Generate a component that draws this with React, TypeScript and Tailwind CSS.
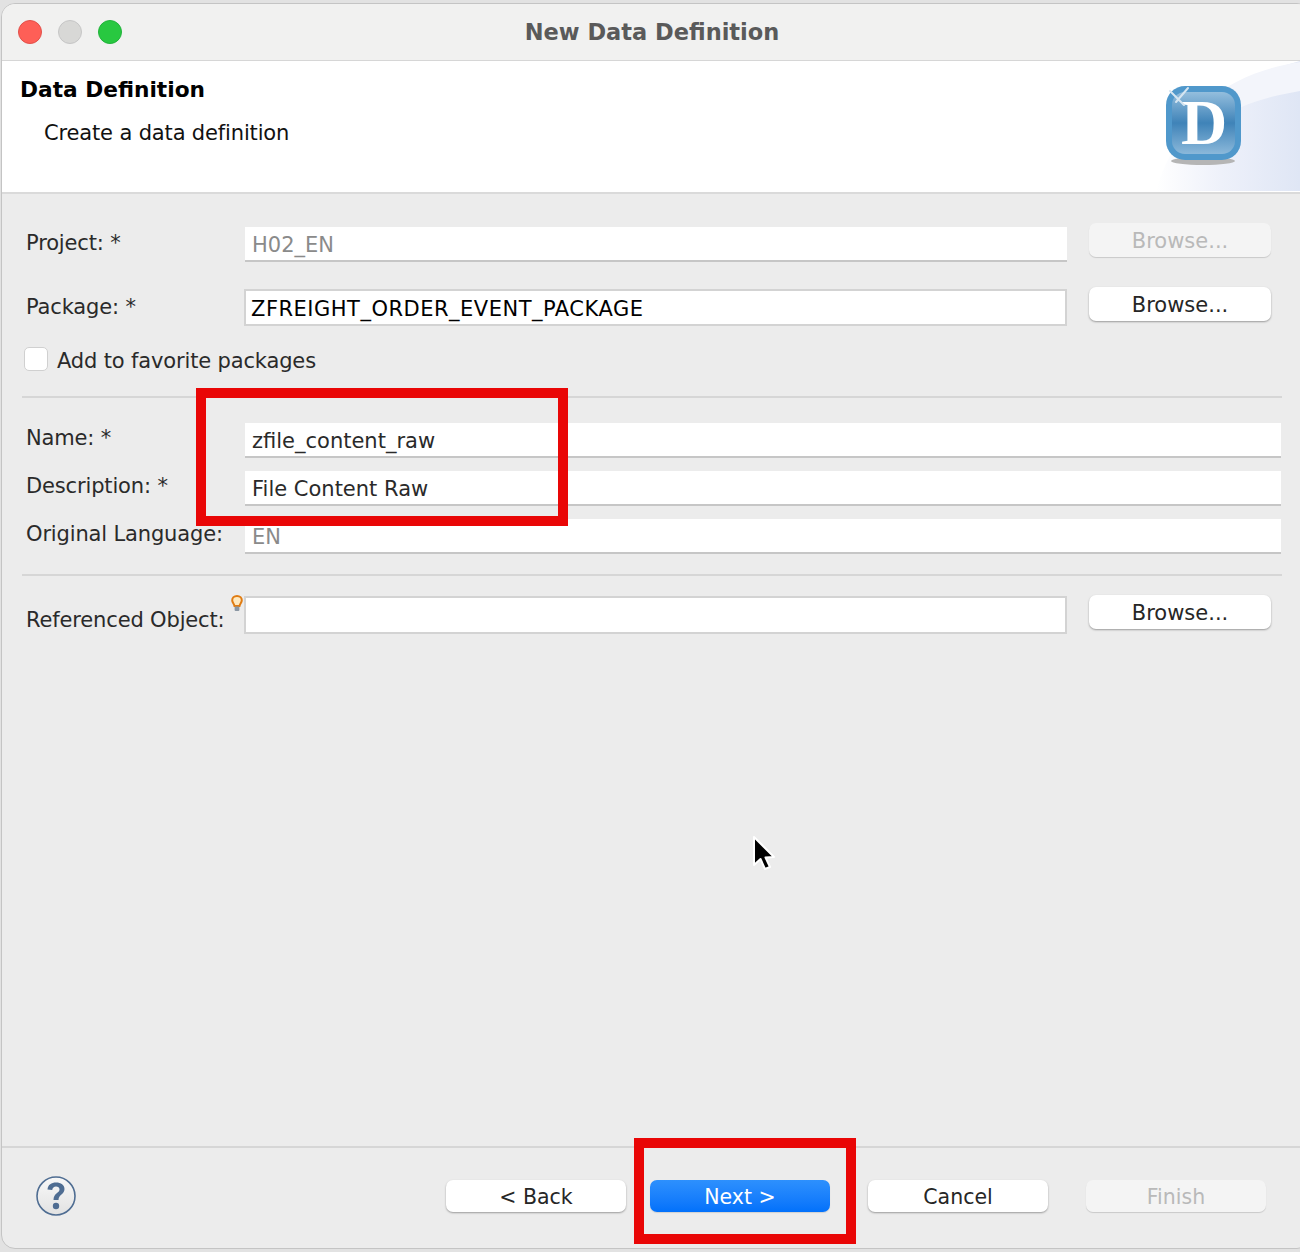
import React from 'react';

const FONT = "font-['DejaVu_Sans','Noto_Sans',sans-serif]";

const Browse = ({ disabled = false }: { disabled?: boolean }) => (
  <button
    className={
      disabled
        ? 'ml-[22px] h-[34px] w-[182px] shrink-0 rounded-[7px] bg-[#f4f4f4] text-[21px] leading-[36px] text-[#b9b9b9] shadow-[0_1px_1px_rgba(0,0,0,0.15)]'
        : 'ml-[22px] h-[34px] w-[182px] shrink-0 rounded-[7px] bg-white text-[21px] leading-[36px] text-[#262626] shadow-[0_1px_2px_rgba(0,0,0,0.35)]'
    }
  >
    Browse...
  </button>
);

const Label = ({ children, top }: { children: React.ReactNode; top: number }) => (
  <div className="relative h-full w-[219px] shrink-0 tracking-[-0.15px] text-[#2a2a2a]" style={{ paddingTop: top }}>
    {children}
  </div>
);

// plain read-only field, the window's inputs have only a bottom shadow line
const Field = ({ value, muted = false, top = 0 }: { value: string; muted?: boolean; top?: number }) => (
  <div
    className={
      'h-[35px] flex-1 border-b-2 border-[#c6c6c6] bg-white pl-[7px] text-[21px] leading-[37px] ' +
      (muted ? 'text-[#8a8a8a]' : 'text-[#2a2a2a]')
    }
    style={{ marginTop: top }}
  >
    {value}
  </div>
);

const FooterButton = ({ label, kind }: { label: string; kind: 'normal' | 'primary' | 'disabled' }) => {
  const look = {
    normal: 'bg-white text-[#262626] shadow-[0_1px_2px_rgba(0,0,0,0.35)]',
    primary: 'bg-gradient-to-b from-[#2d90fd] to-[#0271fb] text-white shadow-[0_1px_1px_rgba(0,0,0,0.12)]',
    disabled: 'bg-[#f4f4f4] text-[#b9b9b9] shadow-[0_1px_1px_rgba(0,0,0,0.15)]',
  }[kind];
  return (
    <button className={'h-[32px] w-[180px] rounded-[7px] text-[20.5px] leading-[34px] ' + look}>{label}</button>
  );
};

const Logo = () => (
  <svg width="146" height="130" viewBox="0 0 146 130" className="absolute right-0 top-0">
    <defs>
      <linearGradient id="swoosh" x1="0" y1="0" x2="1" y2="0">
        <stop offset="0" stopColor="#ffffff" />
        <stop offset="0.45" stopColor="#eef1fa" />
        <stop offset="1" stopColor="#dfe6f5" />
      </linearGradient>
      <linearGradient id="glass" x1="0" y1="0" x2="0" y2="1">
        <stop offset="0" stopColor="#94bedd" />
        <stop offset="0.5" stopColor="#3f83b8" />
        <stop offset="1" stopColor="#8bb8da" />
      </linearGradient>
    </defs>
    <path d="M2 130 C18 70 70 20 146 0 L146 130 Z" fill="url(#swoosh)" />
    <path d="M46 46 C80 16 115 6 146 1 L146 30 C110 36 80 46 62 62 Z" fill="#f3f5fb" />
    <ellipse cx="49" cy="100" rx="32" ry="4" fill="#b5b5b5" />
    <rect x="12" y="25" width="75" height="74" rx="19" fill="#5098cb" />
    <rect x="18" y="31" width="63" height="62" rx="13" fill="url(#glass)" />
    <text x="50" y="83" textAnchor="middle" fontFamily="'Liberation Serif', serif" fontWeight="700" fontSize="64" fill="#ffffff">
      D
    </text>
    <path d="M16 30 L30 44 M34 27 L22 41" stroke="#d5e5f1" strokeWidth="2" strokeLinecap="round" />
  </svg>
);

const HelpIcon = () => (
  <svg width="42" height="42" viewBox="0 0 42 42">
    <defs>
      <linearGradient id="helpBg" x1="0" y1="0" x2="0" y2="1">
        <stop offset="0" stopColor="#f8f8f8" />
        <stop offset="1" stopColor="#e2e2e2" />
      </linearGradient>
    </defs>
    <circle cx="21" cy="21" r="19" fill="url(#helpBg)" stroke="#4f6d92" strokeWidth="1.6" />
    <path
      d="M12.5 14.5 C13 9.5 16.5 7.5 21 7.5 C26 7.5 29.5 10 29.5 14 C29.5 19.5 23.5 19.5 23.5 25 L18.5 25 C18.5 18 24.5 18 24.5 14.5 C24.5 12.5 23 11.5 21 11.5 C19 11.5 17.5 12.8 17.2 15 Z"
      fill="#4f6d92"
    />
    <circle cx="21" cy="31" r="3.2" fill="#4f6d92" />
  </svg>
);

export default function App() {
  return (
    <div className={'relative h-[1252px] w-[1300px] overflow-hidden bg-[#e2e2e2] pl-[1px] pt-[3px] ' + FONT}>
      <div className="flex h-[1246px] w-[1310px] flex-col overflow-hidden rounded-[14px] border border-[#c4c4c4] bg-[#ececec] text-[21px] leading-[30px]">
        {/* title bar */}
        <div className="relative flex h-[57px] shrink-0 items-center justify-center border-b border-[#d6d6d6] bg-[#f1f1f0] pr-[8px]">
          <div className="absolute left-[16px] top-[16px] flex gap-[16px]">
            <span className="h-[24px] w-[24px] rounded-full border border-[#e2504a] bg-[#fe5f57]" />
            <span className="h-[24px] w-[24px] rounded-full border border-[#c6c6c6] bg-[#d8d8d6]" />
            <span className="h-[24px] w-[24px] rounded-full border border-[#21b33b] bg-[#28c840]" />
          </div>
          <span className="text-[22.5px] font-bold text-[#5a5a5a]">New Data Definition</span>
        </div>

        {/* banner */}
        <div className="relative h-[133px] w-[1298px] shrink-0 border-b-2 border-[#dadada] bg-white pl-[18px] pt-[14px]">
          <div className="text-[21.7px] font-bold leading-[30px] text-black">Data Definition</div>
          <div className="ml-[24px] mt-[13px] text-[21px] leading-[30px] tracking-[-0.15px] text-[#111]">Create a data definition</div>
          <Logo />
        </div>

        {/* form */}
        <div className="w-[1298px] flex-1 pl-[24px]">
          <div className="mt-[29px] flex h-[38px] pr-[29px]">
            <Label top={5}>Project: *</Label>
            <Field value="H02_EN" muted top={4} />
            <Browse disabled />
          </div>

          <div className="mt-[26px] flex h-[38px] pr-[29px]">
            <Label top={5}>Package: *</Label>
            <div className="ml-[-1px] mt-[2px] h-[37px] flex-1 border-2 border-[#d3d3d3] bg-white pl-[5px] text-[21px] leading-[36px] tracking-[0.5px] text-black">
              ZFREIGHT_ORDER_EVENT_PACKAGE
            </div>
            <Browse />
          </div>

          <div className="mt-[22px] flex h-[24px] items-center">
            <span className="ml-[-2px] h-[24px] w-[24px] rounded-[5px] border border-[#d0d0d0] bg-white" />
            <span className="ml-[9px] mt-[3px] tracking-[-0.15px] text-[#2a2a2a]">Add to favorite packages</span>
          </div>

          <div className="ml-[-4px] mr-[18px] mt-[25px] h-[2px] bg-[#d6d6d6]" />

          <div className="mt-[25px] flex h-[35px] pr-[19px]">
            <Label top={0}>Name: *</Label>
            <Field value="zfile_content_raw" />
          </div>
          <div className="mt-[13px] flex h-[35px] pr-[19px]">
            <Label top={0}>Description: *</Label>
            <Field value="File Content Raw" />
          </div>
          <div className="mt-[13px] flex h-[35px] pr-[19px]">
            <Label top={0}>Original Language:</Label>
            <Field value="EN" muted />
          </div>

          <div className="ml-[-4px] mr-[18px] mt-[20px] h-[2px] bg-[#d6d6d6]" />

          <div className="mt-[19px] flex h-[39px] pr-[29px]">
            <Label top={10}>
              Referenced Object:
              <svg width="12" height="17" viewBox="0 0 12 17" className="absolute left-[205px] top-0">
                <path d="M6 1 C3 1 1.2 3 1.2 5.2 C1.2 7.5 3 8.5 3.5 11 L8.5 11 C9 8.5 10.8 7.5 10.8 5.2 C10.8 3 9 1 6 1 Z" fill="#ffe9bf" stroke="#e07c12" strokeWidth="2" />
                <rect x="3.6" y="11.5" width="4.8" height="4.5" rx="1" fill="#8a96a3" />
              </svg>
            </Label>
            <div className="ml-[-1px] mt-[1px] h-[38px] flex-1 border-2 border-[#d3d3d3] bg-white" />
            <Browse />
          </div>
        </div>

        {/* footer */}
        <div className="flex h-[102px] w-[1298px] shrink-0 items-center border-t-2 border-[#d6d6d6] pb-[4px] pl-[33px] pr-[34px]">
          <HelpIcon />
          <div className="ml-auto flex items-center">
            <FooterButton label="< Back" kind="normal" />
            <div className="ml-[24px]">
              <FooterButton label="Next >" kind="primary" />
            </div>
            <div className="ml-[38px]">
              <FooterButton label="Cancel" kind="normal" />
            </div>
            <div className="ml-[38px]">
              <FooterButton label="Finish" kind="disabled" />
            </div>
          </div>
        </div>
      </div>

      {/* annotations drawn over the screenshot */}
      <div className="absolute left-[196px] top-[388px] h-[138px] w-[372px] border-[10px] border-[#e90606]" />
      <div className="absolute left-[634px] top-[1138px] h-[106px] w-[222px] border-[10px] border-[#e90606]" />
      <svg width="26" height="40" viewBox="0 0 26 40" className="absolute left-[750px] top-[833px]">
        <path
          d="M4 4 L4 32 L10.5 26 L15 36 L20 34 L15.5 24.5 L24 24 Z"
          fill="#000000"
          stroke="#ffffff"
          strokeWidth="2"
          strokeLinejoin="round"
        />
      </svg>
    </div>
  );
}
